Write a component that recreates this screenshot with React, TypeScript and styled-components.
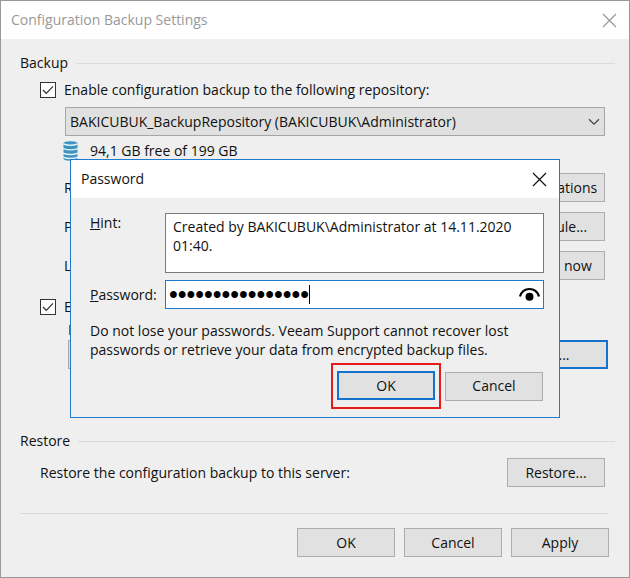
import React from "react";
import styled, { createGlobalStyle, css } from "styled-components";

const GlobalStyle = createGlobalStyle`
  *, *::before, *::after { box-sizing: border-box; }
  body {
    margin: 0;
    background: #efefef;
    color: #111;
    font-family: "Open Sans", "Noto Sans", sans-serif;
    font-size: 14px;
    line-height: 20px;
  }
  button, input, select, textarea { font: inherit; color: inherit; margin: 0; }
`;

const Window = styled.main`
  position: relative;
  display: flex;
  flex-direction: column;
  min-height: 100vh;
  border: 1px solid #999;
  background: #efefef;
`;

const TitleBar = styled.header<{ $muted?: boolean }>`
  display: flex;
  align-items: center;
  justify-content: space-between;
  height: 38px;
  padding: 0 12px 0 10px;
  background: #fff;
  color: ${(p) => (p.$muted ? "#999" : "#111")};
`;

const Title = styled.h1`
  margin: 0;
  font-size: 14px;
  font-weight: 400;
`;

const CloseButton = styled.button`
  display: flex;
  padding: 0;
  border: 0;
  background: none;
`;

const Body = styled.div`
  display: flex;
  flex-direction: column;
  padding: 14px 20px 20px 19px;
`;

const GroupHeading = styled.h2`
  display: flex;
  align-items: center;
  gap: 8px;
  margin: 0 -6px 7px 0;
  font-size: 14px;
  font-weight: 400;
  &::after {
    content: "";
    flex: 1;
    height: 1px;
    background: #dadada;
  }
`;

const CheckLabel = styled.label`
  display: flex;
  align-items: center;
  gap: 8px;
  height: 20px;
  margin-left: 20px;
`;

const CheckMark = styled.span`
  position: relative;
  display: flex;
  width: 16px;
  height: 16px;
  svg { position: absolute; inset: 0; pointer-events: none; }
`;

const CheckInput = styled.input`
  appearance: none;
  width: 16px;
  height: 16px;
  border: 1px solid #333;
  background: #fff;
`;

const Indented = styled.div`
  display: flex;
  flex-direction: column;
  margin: 7px 4px 0 45px;
`;

const SelectBox = styled.div`
  position: relative;
  flex: 1;
  svg { position: absolute; right: 5px; top: 11px; pointer-events: none; }
`;

const Select = styled.select`
  appearance: none;
  display: block;
  width: 100%;
  height: 29px;
  padding: 0 28px 0 4px;
  border: 1px solid #a6a6a6;
  border-radius: 0;
  background: #e0e0e0;
`;

const FreeSpace = styled.div`
  display: flex;
  align-items: center;
  gap: 12px;
  height: 20px;
  margin: 5px 0 0 -2px;
`;

const SettingRows = styled.div`
  display: flex;
  flex-direction: column;
  gap: 10px;
  margin: 12px 0 17px -1px;
`;

const Row = styled.div`
  display: flex;
  align-items: center;
  justify-content: space-between;
  gap: 10px;
`;

const PushButton = styled.button<{ $active?: boolean; $wide?: boolean }>`
  width: ${(p) => (p.$wide ? 106 : 98)}px;
  height: 29px;
  padding: 0;
  border: 1px solid #adadad;
  background: #e1e1e1;
  white-space: nowrap;
  ${(p) => p.$active && css`border: 2px solid #1272cc;`}
`;

const AddButton = styled(PushButton)`
  width: 114px;
`;

const PasswordBlock = styled.div`
  display: flex;
  flex-direction: column;
  margin: 3px 1px 62px 48px;
`;

const RestoreRow = styled(Row)`
  margin: 0 4px 26px 20px;
`;

const Footer = styled.footer`
  display: flex;
  justify-content: flex-end;
  gap: 9px;
  padding-top: 14px;
  border-top: 1px solid #dadada;
`;

const Dialog = styled.section`
  position: absolute;
  top: 158px;
  left: 69px;
  right: 69px;
  border: 1px solid #1f7ad0;
  background: #efefef;
`;

const DialogBody = styled.div`
  display: flex;
  flex-direction: column;
  padding: 15px 15px 17px 19px;
`;

const Fields = styled.div`
  display: grid;
  grid-template-columns: 67px 1fr;
  column-gap: 8px;
  row-gap: 7px;
`;

const FieldLabel = styled.label<{ $centered?: boolean }>`
  align-self: ${(p) => (p.$centered ? "center" : "start")};
  white-space: nowrap;
`;

const Hint = styled.textarea`
  display: block;
  width: 100%;
  height: 60px;
  padding: 3px 7px;
  border: 1px solid #7a7a7a;
  border-radius: 0;
  background: #fff;
  line-height: 19px;
  resize: none;
  overflow: hidden;
`;

const PasswordField = styled.div`
  display: flex;
  align-items: center;
  height: 29px;
  padding: 0 3px;
  border: 1px solid #1f7ad0;
  background: #fff;
`;

const PasswordInput = styled.input`
  field-sizing: content;
  height: 27px;
  padding: 0;
  border: 0;
  outline: 0;
  background: none;
  color: #000;
  font-family: "Liberation Sans", sans-serif;
  font-size: 25px;
  line-height: 27px;
`;

const Caret = styled.span`
  width: 1px;
  height: 19px;
  background: #000;
`;

const RevealButton = styled(CloseButton)`
  margin-left: auto;
`;

const Notice = styled.p`
  margin: 12px 0 0;
  line-height: 19px;
`;

const DialogActions = styled.div`
  display: flex;
  align-items: center;
  justify-content: flex-end;
  gap: 4px;
  margin: 4px 1px -9px 0;
`;

const Highlight = styled.div`
  display: flex;
  padding: 6px 4px 7px;
  border: 2px solid #e61b1b;
`;

function CloseIcon() {
  return (
    <svg width="15" height="15" viewBox="0 0 15 15" fill="none" stroke="currentColor" strokeWidth="1.2">
      <path d="M1 1 L14 14 M14 1 L1 14" />
    </svg>
  );
}

function DiskIcon() {
  return (
    <svg width="15" height="20" viewBox="0 0 15 20">
      <path d="M0.5 2.5 Q0.5 0.3 7.5 0.3 T14.5 2.5 V17.5 Q14.5 19.7 7.5 19.7 T0.5 17.5Z" fill="#3c93bf" />
      <path d="M0.5 3 Q7.5 5.5 14.5 3 M0 7.6 Q7.5 10.2 15 7.6 M0 12.2 Q7.5 14.8 15 12.2 M0 16.2 Q7.5 18.8 15 16.2" fill="none" stroke="#e5f2f9" strokeWidth="1.4" />
    </svg>
  );
}

function EyeIcon() {
  return (
    <svg width="21" height="15" viewBox="0 0 21 15">
      <path d="M1 9.5 C4 -0.5 17 -0.5 20 9.5" fill="none" stroke="#000" strokeWidth="2.2" />
      <circle cx="10.5" cy="9.8" r="4" fill="#000" />
    </svg>
  );
}

function Check({ id, name }: { id: string; name?: string }) {
  return (
    <CheckMark>
      <CheckInput id={id} type="checkbox" aria-label={name} defaultChecked />
      <svg width="16" height="16" viewBox="0 0 16 16" fill="none" stroke="#333" strokeWidth="1.3">
        <path d="M3 8 L6.3 11.4 L13 4.4" />
      </svg>
    </CheckMark>
  );
}

function Dropdown({ label, value }: { label: string; value: string }) {
  return (
    <SelectBox>
      <Select aria-label={label} defaultValue={value}>
        <option>{value}</option>
      </Select>
      <svg width="12" height="8" viewBox="0 0 12 8" fill="none" stroke="#444" strokeWidth="1.3">
        <path d="M1 1.2 L6 6.2 L11 1.2" />
      </svg>
    </SelectBox>
  );
}

// The open dialog covers these rows from their first letter on.
const settings = [
  { label: "R", action: "Notifications", wide: false },
  { label: "P", action: "Schedule...", wide: true },
  { label: "L", action: "Backup now", wide: true },
];

export default function App() {
  return (
    <>
      <GlobalStyle />
      <Window>
        <TitleBar $muted>
          <Title>Configuration Backup Settings</Title>
          <CloseButton aria-label="Close"><CloseIcon /></CloseButton>
        </TitleBar>
        <Body>
          <GroupHeading>Backup</GroupHeading>
          <CheckLabel htmlFor="enable">
            <Check id="enable" />
            Enable configuration backup to the following repository:
          </CheckLabel>
          <Indented>
            <Dropdown label="Repository" value="BAKICUBUK_BackupRepository (BAKICUBUK\Administrator)" />
            <FreeSpace><DiskIcon />94,1 GB free of 199 GB</FreeSpace>
            <SettingRows>
              {settings.map((s) => (
                <Row key={s.label}>
                  <span>{s.label}</span>
                  <PushButton $wide={s.wide}>{s.action}</PushButton>
                </Row>
              ))}
            </SettingRows>
          </Indented>
          <CheckLabel htmlFor="encrypt">
            <Check id="encrypt" name="Encrypt configuration backup" />
            E
          </CheckLabel>
          <PasswordBlock>
            <span>P</span>
            <Row>
              <Dropdown label="Stored password" value="" />
              <AddButton $active>Add...</AddButton>
            </Row>
          </PasswordBlock>
          <GroupHeading>Restore</GroupHeading>
          <RestoreRow>
            <span>Restore the configuration backup to this server:</span>
            <PushButton>Restore...</PushButton>
          </RestoreRow>
          <Footer>
            <PushButton>OK</PushButton>
            <PushButton>Cancel</PushButton>
            <PushButton>Apply</PushButton>
          </Footer>
        </Body>

        <Dialog role="dialog" aria-label="Password">
          <TitleBar as="div">
            <Title as="h2">Password</Title>
            <CloseButton aria-label="Close"><CloseIcon /></CloseButton>
          </TitleBar>
          <DialogBody>
            <Fields>
              <FieldLabel htmlFor="hint"><u>H</u>int:</FieldLabel>
              <Hint id="hint" readOnly defaultValue="Created by BAKICUBUK\Administrator at 14.11.2020 01:40." />
              <FieldLabel $centered htmlFor="password"><u>P</u>assword:</FieldLabel>
              <PasswordField>
                <PasswordInput id="password" type="password" defaultValue="0123456789abcdef" />
                <Caret />
                <RevealButton aria-label="Show password"><EyeIcon /></RevealButton>
              </PasswordField>
            </Fields>
            <Notice>
              Do not lose your passwords. Veeam Support cannot recover lost passwords or retrieve your data from encrypted backup files.
            </Notice>
            <DialogActions>
              <Highlight><PushButton $active>OK</PushButton></Highlight>
              <PushButton>Cancel</PushButton>
            </DialogActions>
          </DialogBody>
        </Dialog>
      </Window>
    </>
  );
}
